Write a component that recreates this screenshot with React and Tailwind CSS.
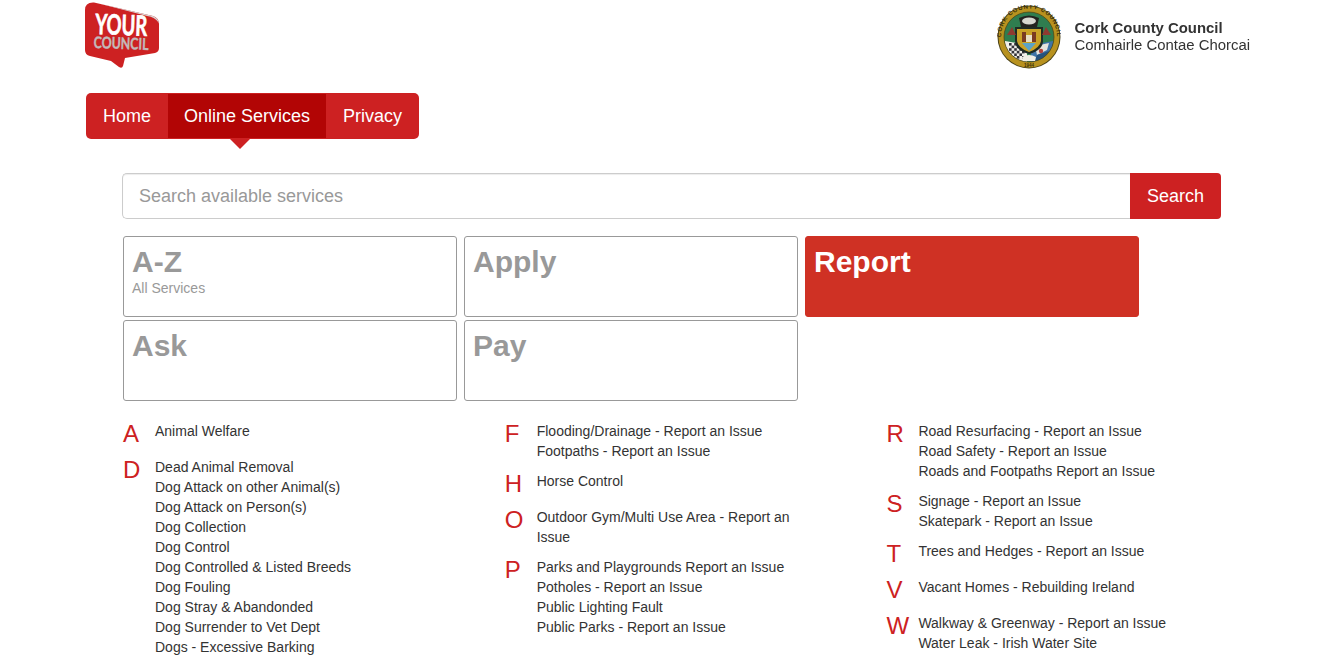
import React from "react";

const columns = [
    [
        { letter: "A", items: ["Animal Welfare"] },
        {
            letter: "D",
            items: [
                "Dead Animal Removal",
                "Dog Attack on other Animal(s)",
                "Dog Attack on Person(s)",
                "Dog Collection",
                "Dog Control",
                "Dog Controlled & Listed Breeds",
                "Dog Fouling",
                "Dog Stray & Abandonded",
                "Dog Surrender to Vet Dept",
                "Dogs - Excessive Barking",
            ],
        },
    ],
    [
        { letter: "F", items: ["Flooding/Drainage - Report an Issue", "Footpaths - Report an Issue"] },
        { letter: "H", items: ["Horse Control"] },
        { letter: "O", items: ["Outdoor Gym/Multi Use Area - Report an Issue"] },
        {
            letter: "P",
            items: [
                "Parks and Playgrounds Report an Issue",
                "Potholes - Report an Issue",
                "Public Lighting Fault",
                "Public Parks - Report an Issue",
            ],
        },
    ],
    [
        {
            letter: "R",
            items: [
                "Road Resurfacing - Report an Issue",
                "Road Safety - Report an Issue",
                "Roads and Footpaths Report an Issue",
            ],
        },
        { letter: "S", items: ["Signage - Report an Issue", "Skatepark - Report an Issue"] },
        { letter: "T", items: ["Trees and Hedges - Report an Issue"] },
        { letter: "V", items: ["Vacant Homes - Rebuilding Ireland"] },
        { letter: "W", items: ["Walkway & Greenway - Report an Issue", "Water Leak - Irish Water Site"] },
    ],
];

const YourCouncilLogo = () => (
    <svg width="74" height="66" viewBox="0 0 74 66" className="block">
        <path
            d="M9 0.5 L68 14 Q74 16 74 22 L74 46 Q74 50 70 51 L40 56 L38 64 Q37 67 34 65 L26 59 L5 54 Q0 53 0 48 L0 8 Q0 0 9 0.5 Z"
            fill="#cd2122"
        />
        <path d="M14 1.5 L68 14 Q73 16 74 21 Q70 15 62 14 Z" fill="#d9d4d4" />
        <g transform="rotate(2 36 30) scale(1 1.4)" fontFamily="Lato, 'Liberation Sans', sans-serif" fontWeight="700">
            <text x="10" y="23.5" fontSize="20" fill="#ffffff" stroke="#ffffff" strokeWidth="0.5" textLength="52" lengthAdjust="spacingAndGlyphs">YOUR</text>
            <text x="9" y="33.5" fontSize="11.5" fill="#c3b9ba" stroke="#c3b9ba" strokeWidth="0.3" textLength="55" lengthAdjust="spacingAndGlyphs">COUNCIL</text>
        </g>
    </svg>
);

const Crest = () => {
    const checks = [];
    for (let row = 0; row < 6; row++) {
        for (let col = 0; col < 6; col++) {
            if ((row + col) % 2 === 0) {
                checks.push(<rect key={row + "-" + col} x={12 + col * 2.6} y={38 + row * 2.6} width="2.6" height="2.6" fill="#33333a" />);
            }
        }
    }

    return (
        <svg width="64" height="64" viewBox="0 0 64 64" className="block">
            <defs>
                <clipPath id="crest-inner">
                    <circle cx="32" cy="32" r="25" />
                </clipPath>
            </defs>
            <circle cx="32" cy="32" r="31.5" fill="#4a4218" />
            <circle cx="32" cy="32" r="30.5" fill="#b8921f" />
            <circle cx="32" cy="32" r="25" fill="#2f7d4f" />
            <g clipPath="url(#crest-inner)">
                <path d="M8 36 L30 40 L30 60 L8 60 Z" fill="#f2f0ea" />
                {checks}
                <path d="M56 36 L34 40 L34 60 L56 60 Z" fill="#3f74a8" />
                <path d="M38 41 L52 38 L50 45 L40 50 Z" fill="#e6e4de" />
                <circle cx="44" cy="46" r="2.2" fill="#b5443c" />
                <path d="M40 50 L52 46 L48 56 L38 56 Z" fill="#26527d" />
            </g>
            <circle cx="32" cy="32" r="25" fill="none" stroke="#4a3f12" strokeWidth="0.7" />
            <path d="M18 22 L46 22 L46 36 Q46 45 32 49 Q18 45 18 36 Z" fill="#1f2b24" />
            <path d="M20 24 L44 24 L44 36 Q43 43 32 47 Q21 43 20 36 Z" fill="#c9a227" />
            <path d="M25 27 L29 27 L29 37 L25 37 Z M35 27 L39 27 L39 37 L35 37 Z" fill="#7a3b22" />
            <path d="M29 30 L35 30 L35 37 L29 37 Z" fill="#e8dfc4" />
            <path d="M25 38 L39 38 L32 46 Z" fill="#5ba3c9" />
            <path d="M22 13 Q32 8 42 13 L40 22 L24 22 Z" fill="#23231f" />
            <ellipse cx="32" cy="16" rx="7" ry="3.5" fill="#d8d8d0" />
            <path d="M10 30 L15 22 L19 30 Z M54 30 L49 22 L45 30 Z" fill="#8f3a30" />
            <path d="M25 52 Q32 48 39 52 L38 56 L26 56 Z" fill="#f1efe6" />
            <path id="crest-ring" d="M6 42 A28 28 0 1 1 58 42" fill="none" />
            <text fontSize="6" fill="#3a300b" fontFamily="'Liberation Sans', sans-serif" fontWeight="700" letterSpacing="0.8">
                <textPath href="#crest-ring" startOffset="50%" textAnchor="middle">CORK COUNTY COUNCIL</textPath>
            </text>
            <text x="32" y="62" textAnchor="middle" fontSize="4.5" fill="#3a300b" fontFamily="'Liberation Sans', sans-serif" fontWeight="700">1944</text>
        </svg>
    );
};

const Tile = ({ title, subtitle, active }) => (
    <a
        href="#"
        className={
            active
                ? "block h-[81px] w-[334px] rounded-[3px] border border-[#cf3124] bg-[#cf3124] px-2 pt-[4px] text-white"
                : "block h-[81px] w-[334px] rounded-[3px] border border-[#999999] bg-white px-2 pt-[4px] text-[#999999]"
        }
    >
        <div className="text-[30px] font-bold leading-[42px]">{title}</div>
        {subtitle && <div className="-mt-[2px] text-[14px] leading-[14px]">{subtitle}</div>}
    </a>
);

const App = () => {
    return (
        <div className="h-[660px] overflow-hidden bg-white font-['Liberation_Sans',Arial,sans-serif] text-[#333333]">
            <header className="flex h-[93px] justify-between pl-[85px] pr-[94px]">
                <div className="pt-[2px]">
                    <YourCouncilLogo />
                </div>
                <div className="flex items-start gap-[14px] pt-[5px]">
                    <Crest />
                    <div className="pt-[15px] text-[#333333] blur-[0.3px]">
                        <div className="text-[14.9px] font-bold leading-[17px]">Cork County Council</div>
                        <div className="text-[14.9px] leading-[17px]">Comhairle Contae Chorcai</div>
                    </div>
                </div>
            </header>

            <nav className="ml-[86px] flex h-[46px] w-[333px] rounded-[5px] bg-[#cd2122] text-[18px] text-white">
                <a href="#" className="flex w-[82px] items-center justify-center">Home</a>
                <a href="#" className="relative my-px flex w-[158px] items-center justify-center bg-[#b20505]">
                    Online Services
                    <span className="absolute left-[62px] top-[45px] h-0 w-0 border-x-[10px] border-t-[10px] border-x-transparent border-t-[#cd2122]" />
                </a>
                <a href="#" className="flex w-[93px] items-center justify-center">Privacy</a>
            </nav>

            <form className="ml-[122px] mt-[34px] flex h-[46px] w-[1099px]">
                <input
                    type="text"
                    placeholder="Search available services"
                    className="h-full flex-1 rounded-l-[5px] border border-r-0 border-[#cccccc] bg-white px-4 text-[18px] shadow-[inset_0_1px_1px_rgba(0,0,0,0.075)] outline-none placeholder:text-[#999999]"
                />
                <button type="button" className="h-full w-[91px] rounded-r-[4px] bg-[#cd2122] text-[18px] text-white">
                    Search
                </button>
            </form>

            <div className="ml-[123px] mt-[17px] flex w-[1020px] flex-wrap gap-x-[7px] gap-y-[3px]">
                <Tile title="A-Z" subtitle="All Services" />
                <Tile title="Apply" />
                <Tile title="Report" active />
                <Tile title="Ask" />
                <Tile title="Pay" />
            </div>

            <div className="ml-[123px] mt-[20px] flex">
                {columns.map((column) => (
                    <div key={column[0].letter} className="w-[381.7px]">
                        {column.map((group) => (
                            <div key={group.letter} className="flex">
                                <div className="mb-[10px] h-[26px] w-[32px] text-[24px] leading-[26px] text-[#cd2122]">
                                    {group.letter}
                                </div>
                                <ul className="mb-[10px] w-[268px] text-[14px] leading-[20px]">
                                    {group.items.map((item) => (
                                        <li key={item}>{item}</li>
                                    ))}
                                </ul>
                            </div>
                        ))}
                    </div>
                ))}
            </div>
        </div>
    );
};

export default App;
